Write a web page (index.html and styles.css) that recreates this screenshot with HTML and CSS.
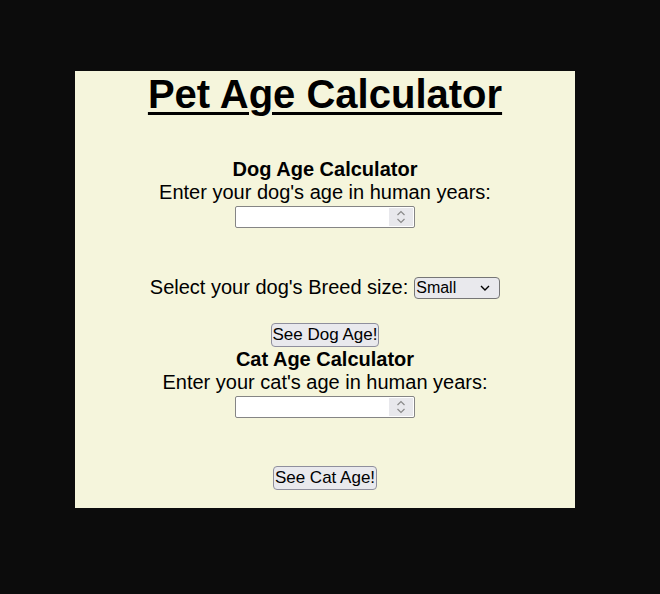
FILE: index.html
```html
<!DOCTYPE html>
<html>
<head>
<meta charset="utf-8">
<link rel="stylesheet" href="styles.css">
</head>
<body>
<div class="card">
  <h1 class="title">Pet Age Calculator</h1>
  <section class="calc dog">
    <h2 class="calc-title">Dog Age Calculator</h2>
    <label class="label" for="dogAge">Enter your dog's age in human years:</label>
    <div class="num-wrap">
      <input class="num" id="dogAge" type="number">
      <span class="spin">
        <svg width="10" height="16" viewBox="0 0 10 16"><path d="M1.5 6 L5 2.5 L8.5 6" fill="none" stroke="#8a8a8a" stroke-width="1.2"/><path d="M1.5 10 L5 13.5 L8.5 10" fill="none" stroke="#8a8a8a" stroke-width="1.2"/></svg>
      </span>
    </div>
    <div class="breed-row">
      <span class="label">Select your dog's Breed size:</span>
      <select class="sel">
        <option>Small</option>
        <option>Medium</option>
        <option>Large</option>
      </select>
    </div>
    <button class="btn btn-dog">See Dog Age!</button>
  </section>
  <section class="calc cat">
    <h2 class="calc-title">Cat Age Calculator</h2>
    <label class="label" for="catAge">Enter your cat's age in human years:</label>
    <div class="num-wrap">
      <input class="num" id="catAge" type="number">
      <span class="spin">
        <svg width="10" height="16" viewBox="0 0 10 16"><path d="M1.5 6 L5 2.5 L8.5 6" fill="none" stroke="#8a8a8a" stroke-width="1.2"/><path d="M1.5 10 L5 13.5 L8.5 10" fill="none" stroke="#8a8a8a" stroke-width="1.2"/></svg>
      </span>
    </div>
    <button class="btn btn-cat">See Cat Age!</button>
  </section>
</div>
</body>
</html>
```
FILE: styles.css
```css
html, body {
  margin: 0;
  padding: 0;
  background: #0c0c0c;
  height: 100%;
}
body {
  padding-top: 71px;
  padding-left: 75px;
  box-sizing: border-box;
  font-family: "Liberation Sans", Arial, sans-serif;
}
.card {
  width: 500px;
  height: 437px;
  background: #f5f5dc;
  display: flex;
  flex-direction: column;
  align-items: center;
  color: #000;
}
.title {
  margin: 0;
  font-size: 40px;
  line-height: 46px;
  font-weight: bold;
  text-decoration: underline;
  text-decoration-thickness: 3px;
  text-underline-offset: 4px;
}
.calc {
  display: flex;
  flex-direction: column;
  align-items: center;
}
.dog { margin-top: 41px; }
.cat { margin-top: 1px; }
.calc-title {
  margin: 0;
  font-size: 20px;
  line-height: 23px;
  font-weight: bold;
}
.label {
  font-size: 20px;
  line-height: 23px;
}
.num-wrap {
  margin-top: 2px;
  width: 180px;
  height: 22px;
  box-sizing: border-box;
  border: 1px solid #858585;
  border-radius: 2px;
  background: #fff;
  display: flex;
  align-items: stretch;
}
.num {
  flex: 1;
  min-width: 0;
  border: none;
  outline: none;
  background: transparent;
  padding: 0 2px;
  font-size: 13.33px;
  -moz-appearance: textfield;
  appearance: textfield;
}
.num::-webkit-inner-spin-button,
.num::-webkit-outer-spin-button {
  -webkit-appearance: none;
  margin: 0;
}
.spin {
  width: 24px;
  margin: 1px 1px 1px 0;
  background: #e8e8ec;
  display: flex;
  align-items: center;
  justify-content: center;
}
.breed-row {
  margin-top: 48px;
  display: flex;
  align-items: center;
  gap: 6px;
}
.sel {
  width: 86px;
  height: 22px;
  box-sizing: border-box;
  font-size: 16px;
  font-family: "Liberation Sans", Arial, sans-serif;
  color: #000;
  padding: 0 0 0 1px;
  border: 1px solid #767676;
  border-radius: 4px;
  -webkit-appearance: none;
  appearance: none;
  background-color: #e9e9ed;
  background-image: url("data:image/svg+xml;utf8,<svg xmlns='http://www.w3.org/2000/svg' width='10' height='6' viewBox='0 0 10 6'><path d='M1 1 L5 5 L9 1' fill='none' stroke='black' stroke-width='1.4'/></svg>");
  background-repeat: no-repeat;
  background-position: right 9px center;
}
.btn {
  font-family: "Liberation Sans", Arial, sans-serif;
  font-size: 17px;
  line-height: 20px;
  color: #000;
  padding: 0 1px;
  height: 24px;
  background: #e9e9ed;
  border: 1px solid #8f8f9d;
  border-radius: 4px;
}
.btn-dog { margin-top: 24px; }
.btn-cat { margin-top: 48px; }
```
